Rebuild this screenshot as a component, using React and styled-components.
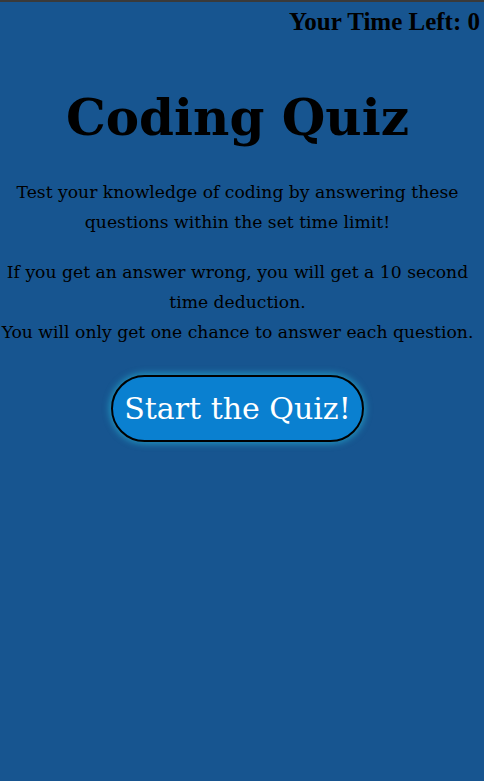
import styled, { createGlobalStyle } from 'styled-components'

const Global = createGlobalStyle`
  html, body {
    margin: 0;
    padding: 0;
    background: #175590;
  }
  body {
    font-family: "Liberation Serif", serif;
    color: #000;
  }
`

const Page = styled.div`
  min-height: 781px;
  box-sizing: border-box;
  border-top: 2px solid #3a3a3a;
  background: #175590;
`

const TopBar = styled.header`
  display: flex;
  justify-content: flex-end;
  padding: 6px 4px 0 0;
  font-family: "Liberation Serif", serif;
  font-weight: 700;
  font-size: 25px;
  line-height: 28px;
`

const Main = styled.main`
  display: flex;
  flex-direction: column;
  align-items: center;
  text-align: center;
  padding: 50px 9px 0 0;
`

const Title = styled.h1`
  margin: 0 0 27px;
  font-family: "DejaVu Serif", serif;
  font-weight: 700;
  font-size: 50px;
  line-height: 64px;
`

const Text = styled.p`
  margin: 0 0 ${p => p.$gap || 20}px;
  font-family: "DejaVu Serif", serif;
  font-size: 17.2px;
  line-height: 30px;
  padding: 0 ${p => p.$pad || 0}px;
`

const StartButton = styled.button`
  margin-top: 8px;
  padding: 0 11px;
  height: 67px;
  border: 2px solid #000;
  border-radius: 40px;
  background: #0a80d0;
  color: #fff;
  font-family: "DejaVu Serif", serif;
  font-size: 30px;
  box-shadow: 0 0 6px 2px rgba(40, 190, 220, 0.55);
  cursor: pointer;
`

export default function App() {
  return (
    <>
      <Global />
      <Page>
        <TopBar>Your Time Left: 0</TopBar>
        <Main>
          <Title>Coding Quiz</Title>
          <Text $pad={14}>
            Test your knowledge of coding by answering these questions within the set time limit!
          </Text>
          <Text $gap={0}>
            If you get an answer wrong, you will get a 10 second time deduction.
            <br />
            You will only get one chance to answer each question.
          </Text>
          <StartButton>Start the Quiz!</StartButton>
        </Main>
      </Page>
    </>
  )
}
